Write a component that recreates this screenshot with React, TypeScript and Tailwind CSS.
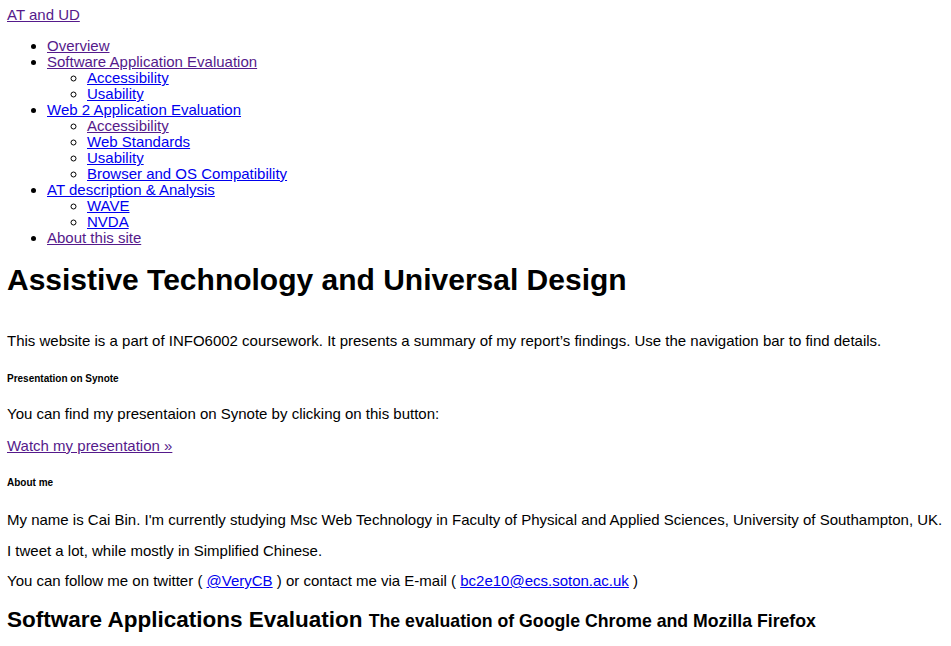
const visited = "text-[#551a8b] underline";
const fresh = "text-[#0000ee] underline";

const nav = [
  { label: "Overview", seen: true },
  {
    label: "Software Application Evaluation",
    seen: true,
    children: [
      { label: "Accessibility", seen: false },
      { label: "Usability", seen: false },
    ],
  },
  {
    label: "Web 2 Application Evaluation",
    seen: false,
    children: [
      { label: "Accessibility", seen: true },
      { label: "Web Standards", seen: false },
      { label: "Usability", seen: false },
      { label: "Browser and OS Compatibility", seen: false },
    ],
  },
  {
    label: "AT description & Analysis",
    seen: false,
    children: [
      { label: "WAVE", seen: false },
      { label: "NVDA", seen: false },
    ],
  },
  { label: "About this site", seen: true },
];

export default function App() {
  return (
    <div className="min-h-screen bg-white text-black px-[7px] pt-[7px] font-['Liberation_Sans',Arial,sans-serif] text-[15px] leading-[16px]">
      <a href="#" className={visited}>AT and UD</a>

      <ul className="list-disc pl-10 mt-[15px]">
        {nav.map((item, i) => (
          <li key={i}>
            <a href="#" className={item.seen ? visited : fresh}>{item.label}</a>
            {item.children && (
              <ul className="list-[circle] pl-10">
                {item.children.map((c, j) => (
                  <li key={j}>
                    <a href="#" className={c.seen ? visited : fresh}>{c.label}</a>
                  </li>
                ))}
              </ul>
            )}
          </li>
        ))}
      </ul>

      <h1 className="mt-[16px] text-[30px] leading-[36px] font-bold">
        Assistive Technology and Universal Design
      </h1>

      <p className="mt-[35px]">
        This website is a part of INFO6002 coursework. It presents a summary of my report’s findings. Use the navigation bar to find details.
      </p>

      <h6 className="mt-[24px] text-[10px] leading-[12px] font-bold">Presentation on Synote</h6>

      <p className="mt-[21px]">You can find my presentaion on Synote by clicking on this button:</p>
      <p className="mt-[16px]">
        <a href="#" className={visited}>Watch my presentation »</a>
      </p>

      <h6 className="mt-[23px] text-[10px] leading-[12px] font-bold">About me</h6>

      <p className="mt-[23px]">
        My name is Cai Bin. I'm currently studying Msc Web Technology in Faculty of Physical and Applied Sciences, University of Southampton, UK.
      </p>
      <p className="mt-[15px]">I tweet a lot, while mostly in Simplified Chinese.</p>
      <p className="mt-[14px]">
        You can follow me on twitter ( <a href="#" className={fresh}>@VeryCB</a> ) or contact me via E-mail ({" "}
        <a href="#" className={fresh}>bc2e10@ecs.soton.ac.uk</a> )
      </p>

      <h2 className="mt-[18px] text-[22.5px] leading-[26px] font-bold">
        Software Applications Evaluation{" "}
        <small className="text-[17.7px] font-bold">The evaluation of Google Chrome and Mozilla Firefox</small>
      </h2>
    </div>
  );
}
